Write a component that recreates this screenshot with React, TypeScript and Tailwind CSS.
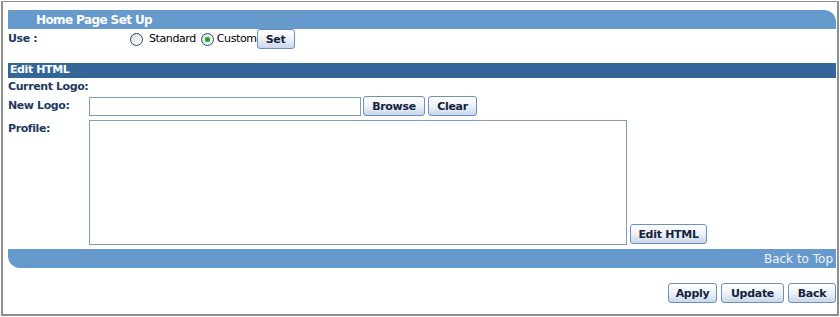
import React from 'react';

const btn =
  'h-[20px] px-1 whitespace-nowrap rounded-[3px] border border-[#6f8fbf] bg-gradient-to-b from-white via-[#eef2f8] to-[#c9d6ea] text-[11px] font-bold text-[#14233c] leading-none flex items-center justify-center tracking-[-0.3px]';

function Radio({ checked }: { checked?: boolean }) {
  return (
    <span className="w-[13px] h-[13px] rounded-full border border-[#1c5180] bg-gradient-to-br from-[#dcdcd5] to-white flex items-center justify-center">
      {checked && <span className="w-[5px] h-[5px] rounded-full bg-[#21a121]" />}
    </span>
  );
}

function App() {
  return (
    <div className="w-[840px] h-[317px] bg-white font-['DejaVu_Sans',Verdana,sans-serif] tracking-[-0.4px]">
      <div className="ml-px mt-px w-[838px] h-[315px] border-t border-l-2 border-r-2 border-b-2 border-[#8e8e8e] pl-[5px] pt-2 pr-px">
        {/* header */}
        <div className="w-[828px] h-[19px] bg-[#6699cc] rounded-tr-[12px] flex items-center pl-[28px]">
          <span className="text-white text-[12px] font-bold tracking-[-0.6px]">Home Page Set Up</span>
        </div>

        {/* use row */}
        <div className="flex items-center h-[20px] text-[11px] text-[#1f3a60]">
          <span className="w-[122px] font-bold">Use :</span>
          <Radio />
          <span className="ml-[6px] text-black">Standard</span>
          <span className="ml-[5px]">
            <Radio checked />
          </span>
          <span className="ml-[3px] text-black">Custom</span>
          <button className={`${btn} w-[38px]`}>Set</button>
        </div>

        {/* edit html */}
        <div className="mt-[14px] w-[828px] h-[15px] bg-[#356699] flex items-center pl-[2px]">
          <span className="text-white text-[11px] font-bold">Edit HTML</span>
        </div>

        <div className="text-[11px] font-bold text-[#1f3a60]">
          <div className="h-[18px] flex items-center">Current Logo:</div>
          <div className="flex items-center h-[20px]">
            <span className="w-[81px]">New Logo:</span>
            <div className="w-[272px] h-[19px] border border-[#7f9db9] bg-white" />
            <button className={`${btn} ml-[2px] w-[62px]`}>Browse</button>
            <button className={`${btn} ml-[3px] w-[49px]`}>Clear</button>
          </div>
          <div className="flex mt-[4px]">
            <span className="w-[81px] pt-px">Profile:</span>
            <div className="w-[538px] h-[125px] border border-[#7f9db9] bg-white" />
            <div className="flex items-end ml-[3px]">
              <button className={`${btn} w-[77px] mb-px`}>Edit HTML</button>
            </div>
          </div>
        </div>

        {/* back to top */}
        <div className="mt-[4px] w-[828px] h-[19px] bg-[#6699cc] rounded-bl-[12px] flex items-center justify-end pr-[3px]">
          <span className="text-[#eef3fa] text-[12px] tracking-normal">Back to Top</span>
        </div>

        <div className="flex justify-end gap-[4px] mt-[15px] w-[828px]">
          <button className={`${btn} w-[49px]`}>Apply</button>
          <button className={`${btn} w-[63px]`}>Update</button>
          <button className={`${btn} w-[48px]`}>Back</button>
        </div>
      </div>
    </div>
  );
}

export default App;
